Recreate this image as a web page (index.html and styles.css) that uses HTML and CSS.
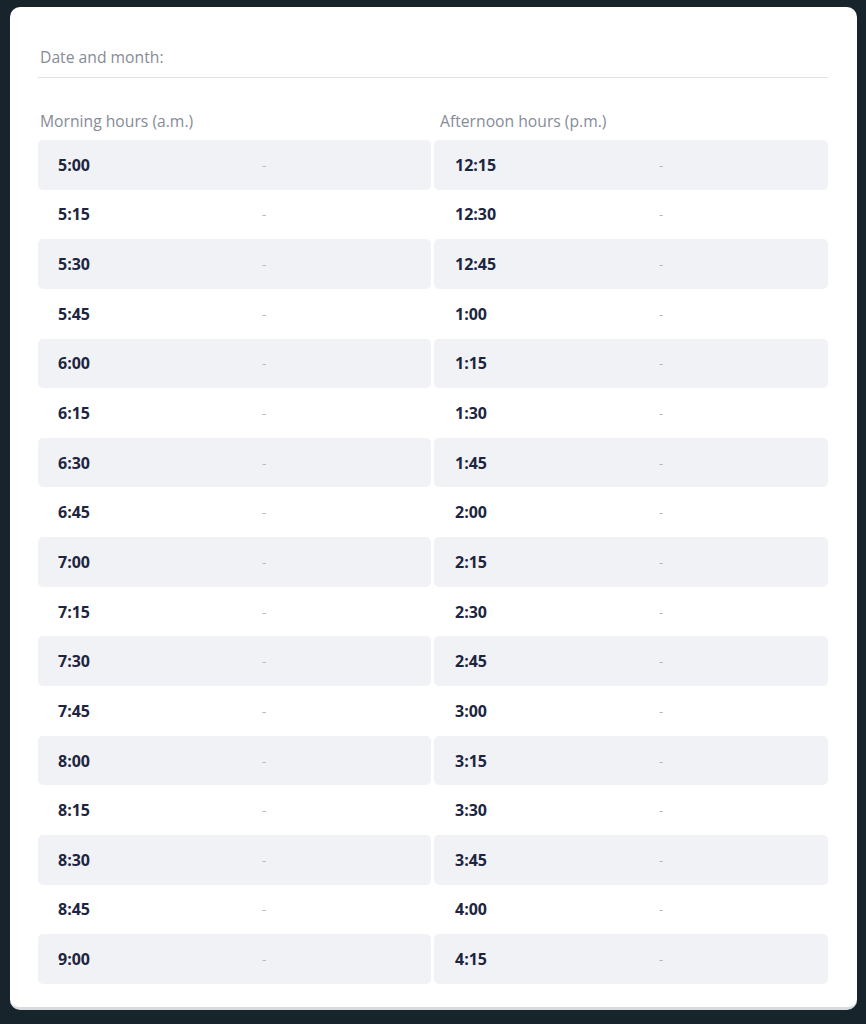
FILE: index.html
```html
<!DOCTYPE html>
<html lang="en">
<head>
<meta charset="utf-8">
<title>Hours log</title>
<link rel="stylesheet" href="styles.css">
</head>
<body>
<main class="card">
  <div class="date-field">Date and month:</div>
  <div class="columns">
    <section class="col">
      <h2 class="col-title">Morning hours (a.m.)</h2>
      <div class="row alt"><span class="time">5:00</span><span class="dash">-</span></div>
      <div class="row"><span class="time">5:15</span><span class="dash">-</span></div>
      <div class="row alt"><span class="time">5:30</span><span class="dash">-</span></div>
      <div class="row"><span class="time">5:45</span><span class="dash">-</span></div>
      <div class="row alt"><span class="time">6:00</span><span class="dash">-</span></div>
      <div class="row"><span class="time">6:15</span><span class="dash">-</span></div>
      <div class="row alt"><span class="time">6:30</span><span class="dash">-</span></div>
      <div class="row"><span class="time">6:45</span><span class="dash">-</span></div>
      <div class="row alt"><span class="time">7:00</span><span class="dash">-</span></div>
      <div class="row"><span class="time">7:15</span><span class="dash">-</span></div>
      <div class="row alt"><span class="time">7:30</span><span class="dash">-</span></div>
      <div class="row"><span class="time">7:45</span><span class="dash">-</span></div>
      <div class="row alt"><span class="time">8:00</span><span class="dash">-</span></div>
      <div class="row"><span class="time">8:15</span><span class="dash">-</span></div>
      <div class="row alt"><span class="time">8:30</span><span class="dash">-</span></div>
      <div class="row"><span class="time">8:45</span><span class="dash">-</span></div>
      <div class="row alt"><span class="time">9:00</span><span class="dash">-</span></div>
    </section>
    <section class="col">
      <h2 class="col-title">Afternoon hours (p.m.)</h2>
      <div class="row alt"><span class="time">12:15</span><span class="dash">-</span></div>
      <div class="row"><span class="time">12:30</span><span class="dash">-</span></div>
      <div class="row alt"><span class="time">12:45</span><span class="dash">-</span></div>
      <div class="row"><span class="time">1:00</span><span class="dash">-</span></div>
      <div class="row alt"><span class="time">1:15</span><span class="dash">-</span></div>
      <div class="row"><span class="time">1:30</span><span class="dash">-</span></div>
      <div class="row alt"><span class="time">1:45</span><span class="dash">-</span></div>
      <div class="row"><span class="time">2:00</span><span class="dash">-</span></div>
      <div class="row alt"><span class="time">2:15</span><span class="dash">-</span></div>
      <div class="row"><span class="time">2:30</span><span class="dash">-</span></div>
      <div class="row alt"><span class="time">2:45</span><span class="dash">-</span></div>
      <div class="row"><span class="time">3:00</span><span class="dash">-</span></div>
      <div class="row alt"><span class="time">3:15</span><span class="dash">-</span></div>
      <div class="row"><span class="time">3:30</span><span class="dash">-</span></div>
      <div class="row alt"><span class="time">3:45</span><span class="dash">-</span></div>
      <div class="row"><span class="time">4:00</span><span class="dash">-</span></div>
      <div class="row alt"><span class="time">4:15</span><span class="dash">-</span></div>
    </section>
  </div>
</main>
</body>
</html>
```
FILE: styles.css
```css
* { box-sizing: border-box; }

html, body {
  margin: 0;
  padding: 0;
  background: #18242b;
}

body {
  font-family: "Open Sans", "Noto Sans", "Liberation Sans", sans-serif;
  padding: 7px 9px 0 10px;
  height: 1024px;
}

.card {
  width: 847px;
  height: 1003px;
  background: #ffffff;
  border-radius: 10px;
  border-bottom: 3px solid #d9dbe0;
  padding: 40px 29px 0 28px;
}

.date-field {
  font-size: 15.7px;
  line-height: 20px;
  color: #868b97;
  padding: 0 0 10px 2px;
  border-bottom: 1px solid #e1e3e8;
}

.columns {
  display: grid;
  grid-template-columns: 393px 394px;
  column-gap: 3px;
  margin-top: 33px;
}

.col-title {
  margin: 0 0 9px 2px;
  font-size: 15.7px;
  line-height: 20px;
  font-weight: 400;
  color: #868b97;
}

.col:last-child .col-title {
  margin-left: 6px;
}

.row {
  height: 49.65px;
  display: grid;
  grid-template-columns: 204px 1fr;
  align-items: center;
  padding-left: 20px;
  border-radius: 5px;
}

.col:last-child .row {
  padding-left: 21px;
}

.row.alt {
  background: #f1f2f6;
}

.time {
  font-size: 16px;
  font-weight: 700;
  color: #1d2540;
}

.dash {
  font-size: 13px;
  color: #b3b6be;
}
```
